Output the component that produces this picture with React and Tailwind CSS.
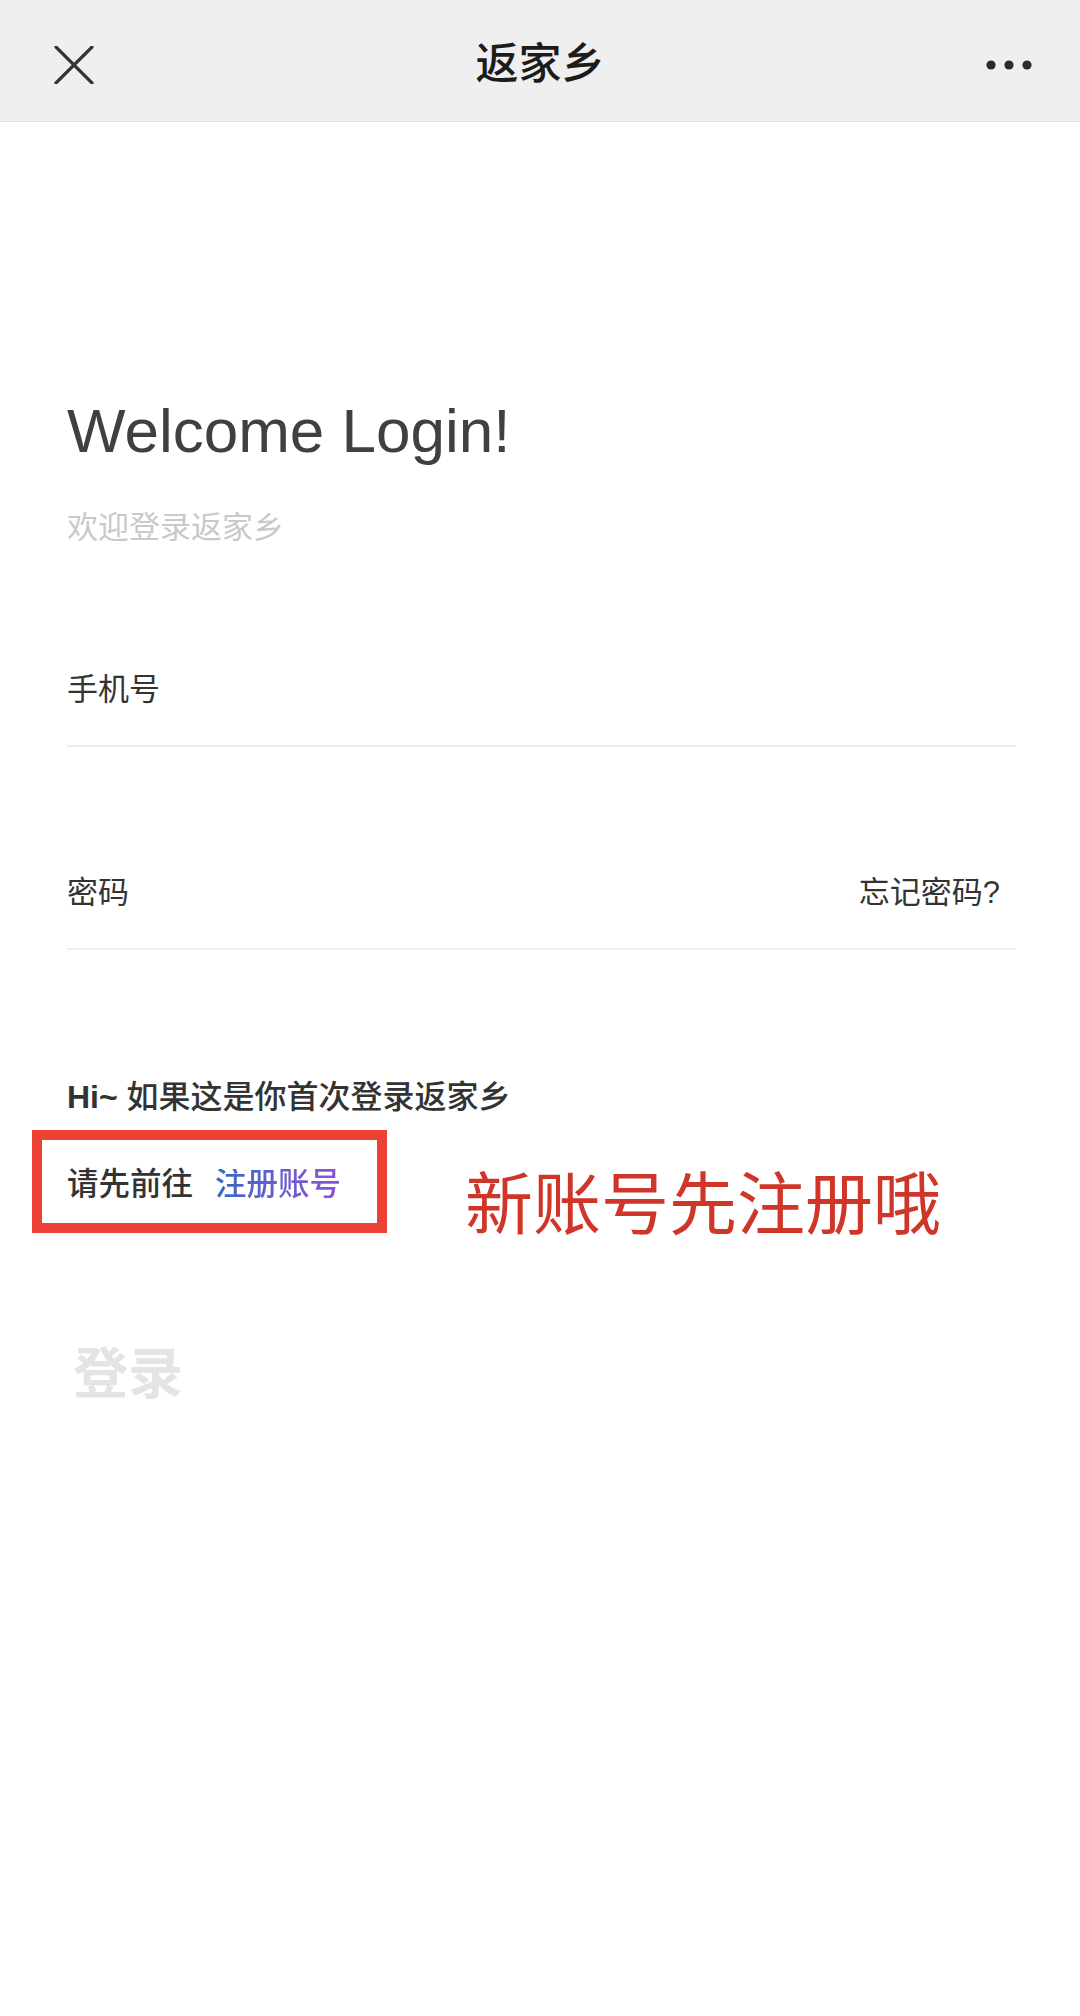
export default function App() {
  const font = { fontFamily: '"Liberation Sans", "Noto Sans CJK SC", sans-serif' };

  return (
    <div className="w-[1080px] min-h-[2016px] bg-white" style={font}>
      {/* top bar */}
      <div className="h-[122px] bg-[#efefef] border-b border-[#e3e3e3] flex items-center justify-between pt-[8px] pl-[54px] pr-[48px]">
        <svg width="40" height="38" viewBox="0 0 40 38" fill="none">
          <path d="M2 1 L38 37 M38 1 L2 37" stroke="#333" strokeWidth="3.2" strokeLinecap="round" />
        </svg>
        <div className="text-[43px] leading-none font-medium text-[#1c1c1c]">返家乡</div>
        <svg width="46" height="10" viewBox="0 0 46 10">
          <circle cx="5" cy="5" r="4.6" fill="#2b2b2b" />
          <circle cx="23" cy="5" r="4.6" fill="#2b2b2b" />
          <circle cx="41" cy="5" r="4.6" fill="#2b2b2b" />
        </svg>
      </div>

      <div className="pl-[67px] pr-[64px]">
        <h1 className="mt-[278px] text-[62px] leading-none text-[#404040]">Welcome Login!</h1>
        <p className="mt-[50px] text-[31px] leading-none text-[#c9c9c9]">欢迎登录返家乡</p>

        {/* phone */}
        <div className="mt-[131px] border-b-2 border-[#eeeeee] pb-[40px]">
          <span className="block text-[31px] leading-none text-[#333]">手机号</span>
        </div>

        {/* password */}
        <div className="mt-[130px] border-b-2 border-[#eeeeee] pb-[40px] pr-[16px] flex items-center justify-between">
          <span className="text-[31px] leading-none text-[#333]">密码</span>
          <span className="text-[31px] leading-none text-[#333]">忘记密码?</span>
        </div>

        <p className="mt-[131px] text-[32px] leading-none font-medium text-[#333]">
          <span className="font-bold">Hi~</span> 如果这是你首次登录返家乡
        </p>

        <div className="mt-[17px] flex items-start">
          <div className="-ml-[35px] w-[355px] h-[103px] border-[10px] border-[#ee4136] flex items-center pt-[6px] pl-[25px]">
            <span className="text-[31.5px] leading-none font-medium text-[#333]">请先前往</span>
            <span className="ml-[22px] text-[31.5px] leading-none font-medium bg-gradient-to-r from-[#2a6ac2] to-[#8e4ed9] bg-clip-text text-transparent">
              注册账号
            </span>
          </div>
          <span className="ml-[78px] mt-[41px] text-[68px] leading-none text-[#cf3528]">新账号先注册哦</span>
        </div>

        <div className="mt-[108px] pl-[6px] text-[55px] leading-none font-bold text-[#e4e4e4]">登录</div>
      </div>
    </div>
  );
}
